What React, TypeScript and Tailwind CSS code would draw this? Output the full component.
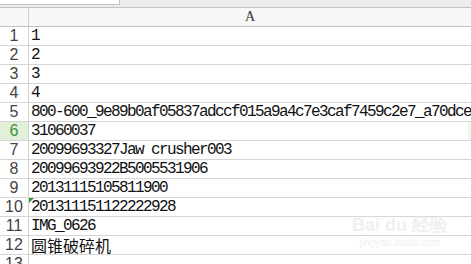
import React from "react";

const rows: string[] = [
  "1",
  "2",
  "3",
  "4",
  "800-600_9e89b0af05837adccf015a9a4c7e3caf7459c2e7_a70dce",
  "31060037",
  "20099693327Jaw crusher003",
  "20099693922B5005531906",
  "20131115105811900",
  "201311151122222928",
  "IMG_0626",
  "圆锥破碎机",
  "",
];

export default function App() {
  return (
    <div className="w-[471px] h-[264px] overflow-hidden bg-white relative" style={{ fontFamily: '"Liberation Sans", Arial, sans-serif' }}>
      {/* top strip */}
      <div className="h-[7px] flex bg-[#ececec]">
        <div className="w-[120px] h-[5px] bg-white border-r border-b border-[#c4c4c4]" />
      </div>
      {/* column header */}
      <div className="h-[20px] flex border-t border-b border-[#c2c2c2] bg-[#f8f8f8]">
        <div className="w-[29px] border-r border-[#d0d0d0]" />
        <div className="flex-1 flex items-center justify-center text-[14px] text-[#333] leading-none" style={{ fontFamily: '"Liberation Serif", serif' }}>
          A
        </div>
      </div>
      {rows.map((t, i) => {
        const sel = i === 5;
        const cjk = /[\u4e00-\u9fff]/.test(t);
        return (
          <div key={i} className="h-[19px] flex border-b border-[#d6d6d6]">
            <div
              className={`w-[29px] shrink-0 border-r border-[#d0d0d0] flex items-center justify-center text-[16px] leading-none ${sel ? "bg-[#e2f0da] text-[#3d9140]" : "bg-white text-[#444]"}`}
            >
              {i + 1}
            </div>
            <div className="flex-1 relative flex items-center pl-[2px] overflow-hidden whitespace-nowrap text-[#111]">
              {i === 9 && (
                <div className="absolute left-0 top-0 w-0 h-0 border-t-[5px] border-r-[5px] border-t-[#3a8f3a] border-r-transparent" />
              )}
              {cjk ? (
                <span className="text-[16px] leading-none" style={{ fontFamily: '"Noto Sans CJK SC", sans-serif' }}>{t}</span>
              ) : (
                <span className="text-[16px] leading-none tracking-[-1.6px]" style={{ fontFamily: '"Liberation Mono", monospace' }}>{t}</span>
              )}
              {sel && <div className="absolute right-0 top-0 bottom-0 w-[3px] bg-[#eef8e6]" />}
            </div>
          </div>
        );
      })}
      {/* watermark */}
      <div className="absolute left-[352px] top-[216px] flex flex-col items-center text-[#f0f0f0] pointer-events-none">
        <div className="text-[18px] font-bold leading-none">Bai du 经验</div>
        <div className="text-[10px] leading-none mt-[4px]">jingyan.baidu.com</div>
      </div>
    </div>
  );
}
